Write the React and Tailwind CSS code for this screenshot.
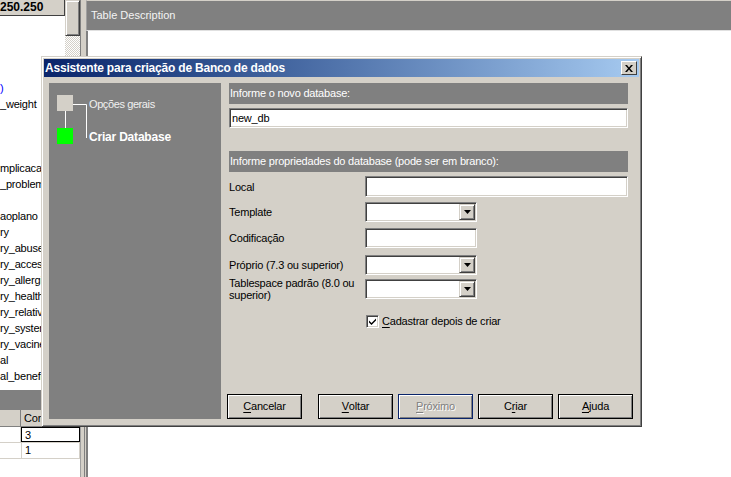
import React from "react";

const LIST_ROWS = [
  "", "", "", "", ")", "_weight", "", "", "", "mplicaca", "_problem", "",
  "aoplano", "ry", "ry_abuse", "ry_acces", "ry_allergi", "ry_health",
  "ry_relativ", "ry_systen", "ry_vacine", "al", "al_benefic",
];

const sunken =
  "bg-white border border-t-[#808080] border-l-[#808080] border-b-white border-r-white shadow-[inset_1px_1px_0_#404040,inset_-1px_-1px_0_#d4d0c8]";

const Field = ({ w }) => <div className={`${sunken} ${w} h-[20px]`} />;

const Combo = () => (
  <div className={`${sunken} w-[112px] h-[20px] flex justify-end items-start p-[1px]`}>
    <div className="w-[16px] h-[16px] bg-[#d4d0c8] border border-t-[#d4d0c8] border-l-[#d4d0c8] border-b-[#404040] border-r-[#404040] shadow-[inset_1px_1px_0_#fff,inset_-1px_-1px_0_#808080] flex items-center justify-center">
      <svg width="7" height="4" viewBox="0 0 7 4">
        <path d="M0 0h7L3.5 4z" fill="#000" />
      </svg>
    </div>
  </div>
);

const FormRow = ({ label, children, className = "" }) => (
  <div className={`flex items-center shrink-0 ${className}`}>
    <div className="w-[136px] leading-[12px]">{label}</div>
    {children}
  </div>
);

const WinButton = ({ children, disabled, className = "" }) => (
  <div
    className={`w-[75px] h-[25px] flex items-center justify-center border shadow-[inset_1px_1px_0_#fff,inset_-1px_-1px_0_#808080] ${
      disabled
        ? "border-[#0a246a] text-[#808080] [text-shadow:1px_1px_0_#fff]"
        : "border-black"
    } ${className}`}
  >
    {children}
  </div>
);

const U = ({ children }) => <span className="underline underline-offset-2">{children}</span>;

const WizardDialog = () => (
  <div className="absolute left-[41px] top-[56px] w-[601px] h-[371px] bg-[#d4d0c8] border border-t-[#d4d0c8] border-l-[#d4d0c8] border-r-[#404040] border-b-[#404040] shadow-[inset_1px_1px_0_#fff,inset_-1px_-1px_0_#808080] p-[2px] flex flex-col">
    {/* title bar */}
    <div className="h-[18px] shrink-0 bg-gradient-to-r from-[#0a246a] to-[#a6caf0] flex items-center justify-between pl-[1px] pr-[2px]">
      <span className="text-white font-bold text-[12px] leading-[18px]">
        Assistente para criação de Banco de dados
      </span>
      <div className="w-[16px] h-[14px] bg-[#d4d0c8] border border-t-white border-l-white border-b-[#404040] border-r-[#404040] flex items-center justify-center">
        <svg width="8" height="7" viewBox="0 0 8 7">
          <path d="M0 0h2l2 2.5L6 0h2L5 3.5 8 7H6L4 4.5 2 7H0l3-3.5z" fill="#000" />
        </svg>
      </div>
    </div>

    <div className="flex mt-[6px] h-[336px] shrink-0">
      {/* steps */}
      <div className="ml-[5px] w-[172px] bg-[#808080] flex pt-[12px] pl-[8px]">
        <svg width="32" height="50" viewBox="0 0 32 50" className="shrink-0">
          <rect x="0" y="0" width="16" height="16" fill="#d4d0c8" />
          <rect x="0" y="33" width="16" height="16" fill="#00ff00" />
          <path d="M8.5 16V33M16 9.5H29.5V43" stroke="#fff" strokeWidth="1" fill="none" />
        </svg>
        <div className="flex flex-col">
          <div className="h-[18px] leading-[18px] text-[#f0f0f0] text-[11px] tracking-[-0.4px]">
            Opções gerais
          </div>
          <div className="mt-[15px] h-[18px] leading-[18px] text-white font-bold text-[12px]">
            Criar Database
          </div>
        </div>
      </div>

      {/* content */}
      <div className="ml-[6px] w-[406px] flex flex-col">
        <div className="pl-[2px] w-[401px] flex flex-col">
          <div className="h-[21px] bg-[#808080] text-white leading-[21px] pl-[1px]">
            Informe o novo database:
          </div>
          <div className={`${sunken} mt-[4px] h-[20px] pl-[2px] leading-[18px]`}>new_db</div>

          <div className="mt-[23px] h-[21px] bg-[#808080] text-white leading-[21px] pl-[1px]">
            Informe propriedades do database (pode ser em branco):
          </div>

          <FormRow label="Local" className="mt-[4px] h-[21px]">
            <div className={`${sunken} w-[264px] h-[21px]`} />
          </FormRow>
          <FormRow label="Template" className="mt-[5px] h-[20px]">
            <Combo />
          </FormRow>
          <FormRow label="Codificação" className="mt-[6px] h-[20px]">
            <Field w="w-[112px]" />
          </FormRow>
          <FormRow label="Próprio (7.3 ou superior)" className="mt-[7px] h-[20px]">
            <Combo />
          </FormRow>
          <FormRow
            label={
              <>
                Tablespace padrão (8.0 ou
                <br />
                superior)
              </>
            }
            className="mt-[4px] h-[20px]"
          >
            <Combo />
          </FormRow>

          <div className="mt-[16px] pl-[137px] flex items-center gap-[3px]">
            <div className={`${sunken} w-[13px] h-[13px] flex items-center justify-center`}>
              <svg width="7" height="7" viewBox="0 0 7 7">
                <path d="M0 2.5l2.5 2.5L7 0.5V2.5L2.5 7 0 4.5z" fill="#000" />
              </svg>
            </div>
            <span className="leading-[13px]">
              <U>C</U>adastrar depois de criar
            </span>
          </div>
        </div>

        <div className="mt-auto flex">
          <WinButton>
            <U>C</U>ancelar
          </WinButton>
          <WinButton className="ml-[16px]">
            <U>V</U>oltar
          </WinButton>
          <WinButton disabled className="ml-[5px]">
            <U>P</U>róximo
          </WinButton>
          <WinButton className="ml-[5px]">
            C<U>r</U>iar
          </WinButton>
          <WinButton className="ml-[5px]">
            <U>A</U>juda
          </WinButton>
        </div>
      </div>
    </div>
  </div>
);

export default function App() {
  return (
    <div className="relative w-[731px] h-[477px] overflow-hidden bg-white flex font-['Liberation_Sans',Arial,sans-serif] text-[11px] tracking-[-0.2px] text-black">
      {/* left column */}
      <div className="w-[86px] shrink-0 flex flex-col">
        <div className="h-[389px] shrink-0 flex">
          <div className="w-[65px] flex flex-col overflow-hidden">
            <div className="h-[16px] shrink-0 bg-[#d4d0c8] border-b border-r border-[#404040] font-bold text-[12px] leading-[15px] tracking-normal">
              250.250
            </div>
            {LIST_ROWS.map((t, i) => (
              <div
                key={i}
                className={`h-[16px] shrink-0 leading-[16px] whitespace-nowrap ${t === ")" ? "text-[#0000ff]" : ""}`}
              >
                {t}
              </div>
            ))}
          </div>
          <div className="w-[16px] flex flex-col border-r border-[#808080]">
            <div className="h-[36px] shrink-0 bg-[#d4d0c8] border border-t-[#d4d0c8] border-l-[#d4d0c8] border-b-[#404040] border-r-[#404040] shadow-[inset_1px_1px_0_#fff,inset_-1px_-1px_0_#808080]" />
            <div className="flex-1 bg-[#e4e2dc] bg-[repeating-conic-gradient(#d4d0c8_0_25%,#ffffff_0_50%)] bg-[length:2px_2px]" />
          </div>
          <div className="w-[5px] bg-[#d4d0c8]" />
        </div>
        <div className="h-[21px] shrink-0 bg-[#808080] border-t border-white" />
        <div className="flex-1 flex">
          <div className="w-[80px] flex flex-col">
            <div className="h-[17px] shrink-0 bg-[#d4d0c8] flex border-b border-[#808080]">
              <div className="w-[21px] border-r border-[#808080]" />
              <div className="pl-[3px] leading-[16px]">Cor</div>
            </div>
            <div className="h-[16px] shrink-0 flex border-b border-[#d4d0c8]">
              <div className="w-[21px] border-r border-[#d4d0c8]" />
              <div className="flex-1 border border-black pl-[3px] leading-[14px]">3</div>
            </div>
            <div className="h-[16px] shrink-0 flex border-b border-[#d4d0c8]">
              <div className="w-[22px] border-r border-[#d4d0c8]" />
              <div className="flex-1 pl-[3px] leading-[15px] border-r border-[#d4d0c8]">1</div>
            </div>
          </div>
          <div className="w-[6px] bg-[#d4d0c8] border-l border-[#a0a0a0] flex justify-center">
            <div className="w-[1px] bg-[#808080] ml-[1px]" />
          </div>
        </div>
      </div>

      {/* right panel */}
      <div className="flex-1 flex flex-col">
        <div className="h-[31px] shrink-0 bg-[#808080] border-t border-[#d4d0c8] border-b border-b-[#e0e0e0] border-l border-l-[#a0a0a0] pl-[4px] leading-[28px] text-[#f4f4f4] tracking-normal">
          Table Description
        </div>
        <div className="flex-1 border-l-2 border-[#808080] bg-white" />
      </div>

      <WizardDialog />
    </div>
  );
}
